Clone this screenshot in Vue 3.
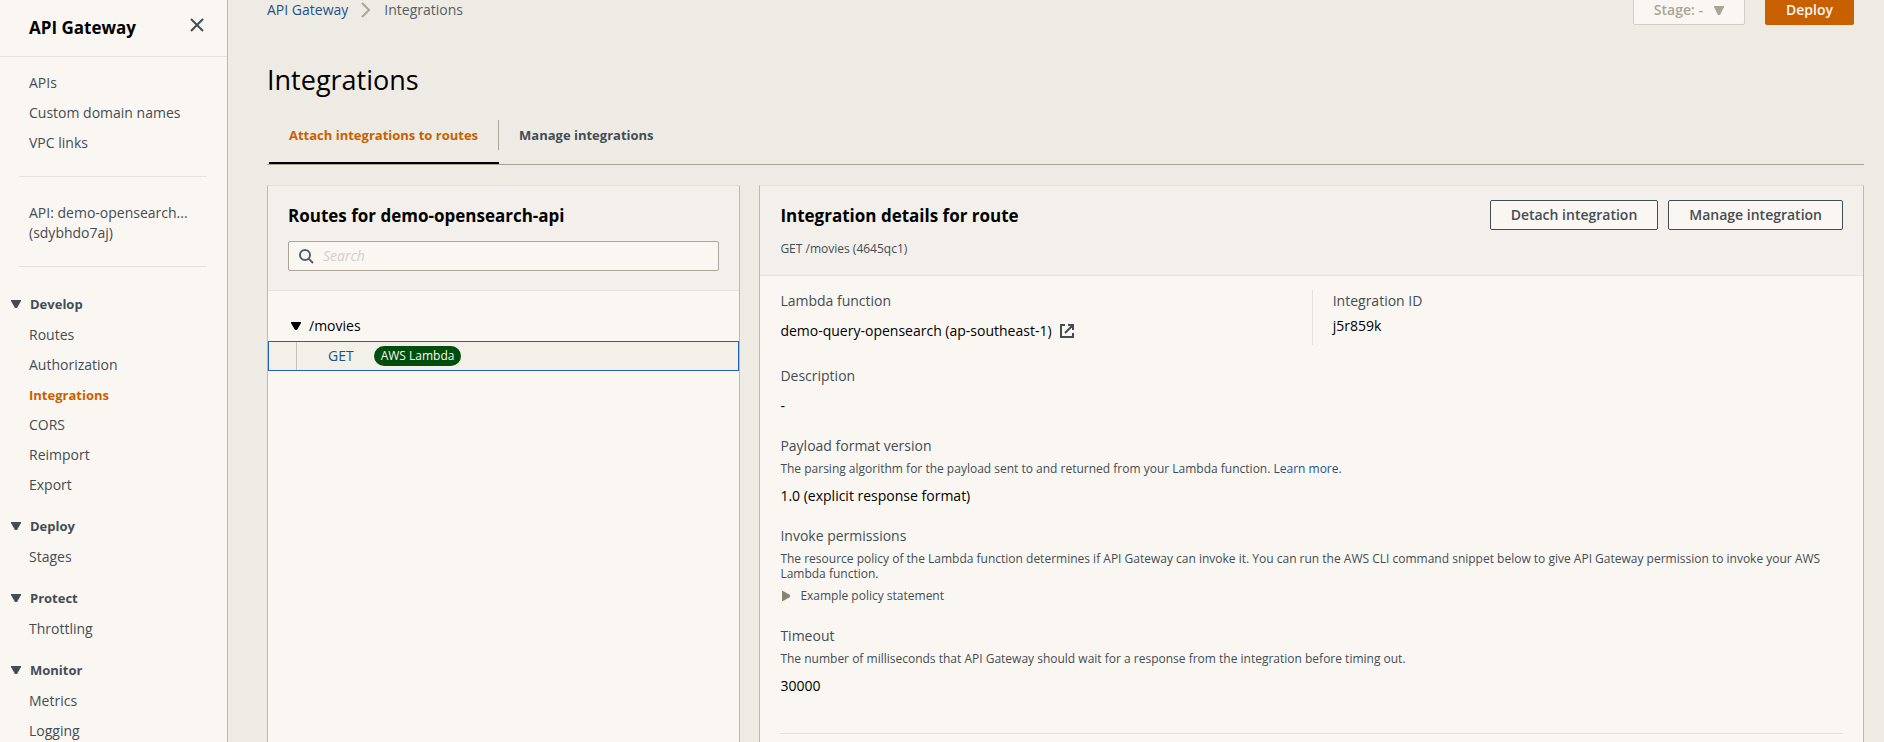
<script setup>
import { reactive, ref } from 'vue'

const topLinks = ['APIs', 'Custom domain names', 'VPC links']

const sections = reactive([
  { title: 'Develop', open: true, items: ['Routes', 'Authorization', 'Integrations', 'CORS', 'Reimport', 'Export'] },
  { title: 'Deploy', open: true, items: ['Stages'] },
  { title: 'Protect', open: true, items: ['Throttling'] },
  { title: 'Monitor', open: true, items: ['Metrics', 'Logging'] },
])

const tabs = ['Attach integrations to routes', 'Manage integrations']
const activeTab = ref(tabs[0])
const search = ref('')
const routeOpen = ref(true)
const policyOpen = ref(false)
</script>

<template>
  <div class="shell">
    <aside class="sidebar">
      <header class="sidebar-head">
        <h2>API Gateway</h2>
        <button class="icon-button" type="button" aria-label="Close navigation">
          <svg width="14" height="14" viewBox="0 0 14 14" fill="none" stroke="currentColor" stroke-width="2">
            <path d="M1 1l12 12M13 1L1 13" />
          </svg>
        </button>
      </header>

      <nav aria-label="API Gateway">
        <ul class="links top-links">
          <li v-for="link in topLinks" :key="link"><a href="#">{{ link }}</a></li>
        </ul>
        <hr />
        <a class="api-name" href="#"><span>API: demo-opensearch...</span><span>(sdybhdo7aj)</span></a>
        <hr />
        <div class="sections">
          <section v-for="section in sections" :key="section.title">
            <button class="section-toggle" type="button" :aria-expanded="section.open" @click="section.open = !section.open">
              <svg width="10" height="8" viewBox="0 0 10 8" fill="currentColor"><path d="M0 0h10v1L6 8H4L0 1z" /></svg>
              {{ section.title }}
            </button>
            <ul v-if="section.open" class="links">
              <li v-for="item in section.items" :key="item">
                <a href="#" :class="{ current: item === 'Integrations' }">{{ item }}</a>
              </li>
            </ul>
          </section>
        </div>
      </nav>
    </aside>

    <main>
      <div class="topbar">
        <nav class="breadcrumbs" aria-label="Breadcrumbs">
          <a href="#">API Gateway</a>
          <svg width="10" height="16" viewBox="0 0 10 16" fill="none" stroke="currentColor" stroke-width="2">
            <path d="M1 1l7 7-7 7" />
          </svg>
          <span>Integrations</span>
        </nav>
        <div class="topbar-actions">
          <button class="button stage" type="button" disabled aria-haspopup="listbox">
            Stage: -
            <svg width="10" height="9" viewBox="0 0 10 9" fill="currentColor"><path d="M0 0h10v1L6 9H4L0 1z" /></svg>
          </button>
          <button class="button primary" type="button">Deploy</button>
        </div>
      </div>

      <h1>Integrations</h1>

      <div class="tabs" role="tablist">
        <button
          v-for="tab in tabs"
          :key="tab"
          type="button"
          role="tab"
          class="tab"
          :class="{ active: tab === activeTab }"
          :aria-selected="tab === activeTab"
          @click="activeTab = tab"
        >
          <span>{{ tab }}</span>
        </button>
      </div>

      <div class="panels">
        <section class="panel">
          <header class="panel-head routes-head">
            <h2>Routes for demo-opensearch-api</h2>
            <label class="search">
              <svg width="15" height="15" viewBox="0 0 15 15" fill="none" stroke="currentColor" stroke-width="2">
                <circle cx="6" cy="6" r="5" />
                <path d="M9.600 9.600L14 14" />
              </svg>
              <input v-model="search" type="text" placeholder="Search" aria-label="Search routes" />
            </label>
          </header>
          <div class="tree">
            <button class="route" type="button" :aria-expanded="routeOpen" @click="routeOpen = !routeOpen">
              <svg width="10" height="8" viewBox="0 0 10 8" fill="currentColor"><path d="M0 0h10v1L6 8H4L0 1z" /></svg>
              /movies
            </button>
            <div v-if="routeOpen" class="method">
              <a href="#">GET</a>
              <span class="badge">AWS Lambda</span>
            </div>
          </div>
        </section>

        <section class="panel">
          <header class="panel-head details-head">
            <div>
              <h2>Integration details for route</h2>
              <p>GET /movies (4645qc1)</p>
            </div>
            <div class="actions">
              <button class="button" type="button">Detach integration</button>
              <button class="button" type="button">Manage integration</button>
            </div>
          </header>

          <div class="details">
            <div class="columns">
              <div class="field">
                <h3>Lambda function</h3>
                <p class="value">
                  demo-query-opensearch (ap-southeast-1)
                  <a href="#" aria-label="Open Lambda function in a new tab">
                    <svg width="14" height="14" viewBox="0 0 14 14" fill="none" stroke="currentColor" stroke-width="2">
                      <path d="M5 1H1v12h12V9M8 1h5v5M13 1L5 9" />
                    </svg>
                  </a>
                </p>
              </div>
              <div class="field compact">
                <h3>Integration ID</h3>
                <p class="value">j5r859k</p>
              </div>
            </div>

            <div class="field">
              <h3>Description</h3>
              <p class="value">-</p>
            </div>

            <div class="field">
              <h3>Payload format version</h3>
              <p class="hint">
                The parsing algorithm for the payload sent to and returned from your Lambda function.
                <a href="#">Learn more.</a>
              </p>
              <p class="value">1.0 (explicit response format)</p>
            </div>

            <div class="field policy">
              <h3>Invoke permissions</h3>
              <p class="hint">
                The resource policy of the Lambda function determines if API Gateway can invoke it. You can run the AWS CLI
                command snippet below to give API Gateway permission to invoke your AWS Lambda function.
              </p>
              <button class="expander" type="button" :aria-expanded="policyOpen" @click="policyOpen = !policyOpen">
                <svg width="8" height="10" viewBox="0 0 8 10" fill="currentColor"><path d="M0 0h1l7 4v2l-7 4H0z" /></svg>
                Example policy statement
              </button>
            </div>

            <div class="field">
              <h3>Timeout</h3>
              <p class="hint">
                The number of milliseconds that API Gateway should wait for a response from the integration before timing
                out.
              </p>
              <p class="value">30000</p>
            </div>
            <hr />
          </div>
        </section>
      </div>
    </main>
  </div>
</template>

<style>
body {
  margin: 0;
  background: #eeebe4;
}
</style>

<style scoped>
* {
  box-sizing: border-box;
}
.shell {
  display: flex;
  height: 100vh;
  overflow: hidden;
  background: #eeebe4;
  color: #000;
  font: 14px/22px "Open Sans", "Noto Sans", sans-serif;
}
h1, h2, h3, p, ul {
  margin: 0;
  padding: 0;
}
ul {
  list-style: none;
}
a {
  color: #1f5189;
  text-decoration: none;
}
button {
  padding: 0;
  border: 0;
  background: none;
  color: inherit;
  font: inherit;
  cursor: pointer;
}
svg {
  display: block;
  flex: none;
}
hr {
  height: 1px;
  margin: 0;
  border: 0;
  background: #e5e2dc;
}
h2 {
  font-size: 17px;
  line-height: 22px;
  font-weight: 700;
}

/* Sidebar */
.sidebar {
  flex: 0 0 228px;
  border-right: 1px solid #bcb9b3;
  background: #faf7f2;
  color: #444c54;
}
.sidebar-head {
  display: flex;
  align-items: flex-start;
  justify-content: space-between;
  height: 57px;
  padding: 17px 23px 0 29px;
  border-bottom: 1px solid #e5e2dc;
}
.sidebar-head h2 {
  color: #000;
}
.icon-button {
  padding: 1px 0;
}
.sidebar hr {
  margin: 0 20px 0 19px;
}
.links a {
  display: block;
  padding: 4px 0 4px 29px;
  color: #444c54;
}
.links a.current {
  color: #c86000;
  font-size: 13px;
  font-weight: 700;
}
.top-links {
  padding: 11px 0 18px;
}
.api-name {
  display: flex;
  flex-direction: column;
  padding: 26px 0 23px 29px;
  color: #444c54;
  line-height: 20px;
}
.sections {
  display: flex;
  flex-direction: column;
  gap: 15px;
  padding-top: 26px;
}
.section-toggle {
  display: flex;
  align-items: center;
  gap: 9px;
  margin-bottom: 5px;
  padding-left: 11px;
  font-size: 13px;
  font-weight: 700;
}

/* Main area */
main {
  display: flex;
  flex: 1;
  flex-direction: column;
  min-width: 0;
  padding: 0 20px 0 39px;
}
.topbar {
  display: flex;
  justify-content: space-between;
  align-items: center;
  margin-top: -5px;
  padding-right: 10px;
}
.breadcrumbs {
  display: flex;
  align-items: center;
  gap: 13px;
  color: #555d65;
}
.breadcrumbs svg {
  color: #aaa597;
}
.topbar-actions,
.actions {
  display: flex;
}
.topbar-actions {
  gap: 20px;
}
.actions {
  gap: 10px;
}
.button {
  display: flex;
  align-items: center;
  gap: 11px;
  height: 30px;
  padding: 0 20px;
  border: 1px solid #444c54;
  border-radius: 2px;
  background: #faf7f2;
  color: #444c54;
  font-size: 14px;
  font-weight: 600;
}
.stage {
  border-color: #d2cfc8;
  color: #aaa597;
  cursor: default;
}
.primary {
  border-color: #c86000;
  background: #c86000;
  color: #faf7f2;
}
h1 {
  margin-top: 37px;
  font-size: 27px;
  line-height: 36px;
  font-weight: 400;
}
.tabs {
  display: flex;
  margin-top: 16px;
  padding-left: 2px;
  border-bottom: 1px solid #aaa597;
}
.tab {
  padding: 6px 0 12px;
  border-bottom: 2px solid transparent;
  color: #444c54;
  font-size: 13px;
  font-weight: 700;
}
.tab span {
  display: block;
  padding: 4px 20px;
}
.tab:not(:last-child) span {
  border-right: 1px solid #aaa597;
}
.tab.active {
  border-bottom-color: #000;
  color: #c86000;
}

/* Panels */
.panels {
  display: grid;
  flex: 1;
  grid-template-columns: 3fr 7fr;
  gap: 19px;
  margin-top: 20px;
}
.panel {
  min-width: 0;
  border: solid #bcb9b3;
  border-width: 1px 1px 0;
  border-top-color: #e3e0da;
  background: #faf7f2;
}
.panel-head {
  padding: 19px 20px;
  border-bottom: 1px solid #e5e2dc;
  background: #f3f0eb;
}
.search {
  display: flex;
  align-items: center;
  gap: 9px;
  height: 30px;
  margin-top: 14px;
  padding: 0 10px;
  border: 1px solid #aaa597;
  border-radius: 2px;
  background: #faf7f2;
  color: #555d65;
}
.search input {
  flex: 1;
  min-width: 0;
  padding: 0;
  border: 0;
  outline: 0;
  background: transparent;
  color: #000;
  font: inherit;
}
.search input::placeholder {
  color: #d2cfc8;
  font-style: italic;
  opacity: 1;
}
.tree {
  padding-top: 24px;
}
.route {
  display: flex;
  align-items: center;
  gap: 8px;
  padding: 0 0 4px 23px;
}
.method {
  display: flex;
  align-items: center;
  height: 30px;
  padding-left: 27px;
  border: 1px solid #1f62b8;
  background: #f3f0e9;
}
.method a {
  padding: 3px 20px 3px 31px;
  border-left: 1px solid #c5c2bc;
}
.badge {
  padding: 0 7px;
  border-radius: 10px;
  background: #004d0c;
  color: #faf7f2;
  font-size: 12px;
  line-height: 20px;
}
.details-head {
  display: flex;
  justify-content: space-between;
  padding: 14px 20px 15px;
}
.details-head h2 {
  margin-top: 5px;
}
.details-head p {
  margin-top: 11px;
  color: #444c54;
  font-size: 12px;
}
.details {
  padding: 14px 20px 0;
}
.field {
  margin-bottom: 18px;
}
.field h3 {
  color: #444c54;
  font-size: 14px;
  font-weight: 400;
}
.value {
  display: flex;
  align-items: center;
  gap: 8px;
  margin-top: 8px;
}
.value a {
  color: #444c54;
}
.compact .value {
  margin-top: 3px;
}
.columns {
  display: grid;
  grid-template-columns: 1fr 1fr;
  margin-bottom: 20px;
}
.columns .field {
  min-height: 55px;
  margin: 0;
}
.columns .compact {
  padding-left: 20px;
  border-left: 1px solid #e5e2dc;
}
.hint {
  margin-top: 4px;
  color: #444c54;
  font-size: 12px;
  line-height: 15px;
}
.hint + .value {
  margin-top: 9px;
}
.policy {
  margin-bottom: 22px;
}
.expander {
  display: flex;
  align-items: center;
  gap: 10px;
  margin-top: 7px;
  padding-left: 2px;
  color: #444c54;
  font-size: 12px;
  line-height: 15px;
}
.expander svg {
  color: #8a8272;
}
.details hr {
  margin-top: 36px;
}
</style>
